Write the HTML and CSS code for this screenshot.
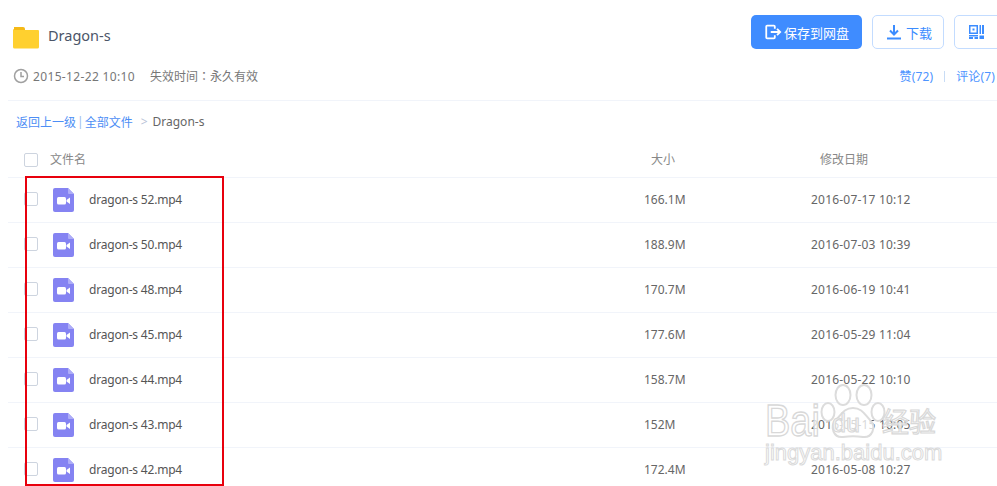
FILE: index.html
```html
<!DOCTYPE html>
<html lang="zh">
<head>
<meta charset="utf-8">
<title>Dragon-s</title>
<link rel="stylesheet" href="styles.css">
</head>
<body>
<div class="page">
  <header class="top">
    <div class="title-row">
      <svg class="folder" viewBox="0 0 26 22" width="26" height="22"><path d="M1 0h9a2 2 0 0 1 2 2v1H1z" fill="#f5b916"/><path d="M0 3a1 1 0 0 1 1-1h0v1h24a1 1 0 0 1 1 1v16a1.500 1.500 0 0 1-1.500 1.500h-23A1.500 1.500 0 0 1 0 20z" fill="#ffd02f"/></svg>
      <h1 class="title">Dragon-s</h1>
      <div class="actions">
        <button class="btn primary">
          <svg viewBox="0 0 20 20" width="18" height="18"><path d="M11 3H3.500a1 1 0 0 0-1 1v12a1 1 0 0 0 1 1H11a1 1 0 0 0 1-1v-2.500M12 6.500V4a1 1 0 0 0-1-1M7.500 10H18M14.500 6.500 18 10l-3.500 3.500" fill="none" stroke="#fff" stroke-width="2"/></svg>
          保存到网盘
        </button>
        <button class="btn ghost">
          <svg viewBox="0 0 16 16" width="16" height="16"><path d="M8 1v9M4 6.500 8 10.500l4-4M1 14.500h14" fill="none" stroke="#3b8cff" stroke-width="2"/></svg>
          下载
        </button>
        <button class="btn ghost qr">
          <svg viewBox="0 0 15 14" width="15" height="14"><path d="M0 0h9v9H0zM1.500 1.500v6h6v-6zM3.500 3.500h2v2h-2zM10.500 0H12v9h-1.500zM13 0h2v9h-2zM0 10h9v1.500H0zM0 12h4v2H0zM5.500 12H9v2H5.500zM10.500 10.500H15V14h-4.500z" fill="#3b8cff" fill-rule="evenodd"/></svg>
        </button>
      </div>
    </div>
    <div class="meta-row">
      <svg class="clock" viewBox="0 0 16 16" width="16" height="16"><circle cx="8" cy="8" r="6.500" fill="none" stroke="#a0a0a0" stroke-width="1.500"/><path d="M8 4v4.500h3" fill="none" stroke="#a0a0a0" stroke-width="1.500"/></svg>
      <span class="date">2015-12-22 10:10</span>
      <span class="expire">失效时间<span class="colon" lang="zh-Hant">：</span>永久有效</span>
      <div class="social"><a>赞(72)</a><i class="vbar"></i><a>评论(7)</a></div>
    </div>
  </header>

  <nav class="crumbs"><a>返回上一级</a><span class="pipe">|</span><a>全部文件</a><span class="gt">&gt;</span><span class="here">Dragon-s</span></nav>

  <div class="list-head row">
    <span class="check head-check"></span>
    <span class="head-name">文件名</span>
    <span class="size head-size">大小</span>
    <span class="time head-time">修改日期</span>
  </div>

  <div class="row"><span class="check"></span><svg class="vid" width="21" height="24"><use href="#v"/></svg><span class="name">dragon-s 52.mp4</span><span class="size">166.1M</span><span class="time">2016-07-17 10:12</span></div>
  <div class="row"><span class="check"></span><svg class="vid" width="21" height="24"><use href="#v"/></svg><span class="name">dragon-s 50.mp4</span><span class="size">188.9M</span><span class="time">2016-07-03 10:39</span></div>
  <div class="row"><span class="check"></span><svg class="vid" width="21" height="24"><use href="#v"/></svg><span class="name">dragon-s 48.mp4</span><span class="size">170.7M</span><span class="time">2016-06-19 10:41</span></div>
  <div class="row"><span class="check"></span><svg class="vid" width="21" height="24"><use href="#v"/></svg><span class="name">dragon-s 45.mp4</span><span class="size">177.6M</span><span class="time">2016-05-29 11:04</span></div>
  <div class="row"><span class="check"></span><svg class="vid" width="21" height="24"><use href="#v"/></svg><span class="name">dragon-s 44.mp4</span><span class="size">158.7M</span><span class="time">2016-05-22 10:10</span></div>
  <div class="row"><span class="check"></span><svg class="vid" width="21" height="24"><use href="#v"/></svg><span class="name">dragon-s 43.mp4</span><span class="size">152M</span><span class="time">2016-05-15 10:05</span></div>
  <div class="row"><span class="check"></span><svg class="vid" width="21" height="24"><use href="#v"/></svg><span class="name">dragon-s 42.mp4</span><span class="size">172.4M</span><span class="time">2016-05-08 10:27</span></div>
</div>

<svg class="defs" width="0" height="0">
  <symbol id="v" viewBox="0 0 21 24">
    <path d="M2 0h13l6 6v16a2 2 0 0 1-2 2H2a2 2 0 0 1-2-2V2a2 2 0 0 1 2-2z" fill="#8583f2"/>
    <path d="M15 0l6 6h-5a1 1 0 0 1-1-1z" fill="#aeadf7"/>
    <rect x="4" y="9" width="9" height="7.500" rx="1.500" fill="#fff"/>
    <path d="M13.500 12l3.500-2.500v6.500l-3.500-2.500z" fill="#fff"/>
  </symbol>
</svg>

<div class="redbox"></div>

<div class="mark">
  <svg class="paw" viewBox="0 0 66 60" width="66" height="60">
    <g fill="#fff" fill-opacity=".75" stroke="#dcdcdc" stroke-width="2">
      <ellipse cx="23" cy="12" rx="7.500" ry="10"/>
      <ellipse cx="44" cy="12" rx="7.500" ry="10"/>
      <ellipse cx="8" cy="29" rx="6.500" ry="9"/>
      <ellipse cx="58" cy="29" rx="6.500" ry="9"/>
      <path d="M33 25c9 0 12 7 17 12 7 7 2 18-7 17-6-1-14-1-20 0-9 1-14-10-7-17 5-5 8-12 17-12z"/>
    </g>
  </svg>
  <span class="mark-b">Bai</span><span class="mark-d">du</span><span class="mark-j">经验</span>
  <span class="mark-url">jingyan.baidu.com</span>
</div>
</body>
</html>
```
FILE: styles.css
```css
* { box-sizing: border-box; }
html, body { margin: 0; padding: 0; }
body {
  width: 997px;
  height: 486px;
  overflow: hidden;
  background: #fff;
  font-family: "Noto Sans", "Noto Sans CJK SC", sans-serif;
  font-size: 12px;
  color: #666;
  position: relative;
}
.page { padding-left: 8px; }
.top { height: 101px; border-bottom: 1px solid #f1f4fa; padding-top: 15px; }
.title-row { display: flex; align-items: center; height: 34px; padding-left: 5px; }
.folder { margin-top: 12px; }
.title { margin: 6px 0 0 9px; font-size: 14.500px; font-weight: 400; color: #4b5568; font-family: "Noto Sans", sans-serif; }
.actions { margin-left: auto; display: flex; gap: 10px; margin-right: -29px; }
.btn { height: 34px; border-radius: 5px; font: 13px "Noto Sans CJK SC", sans-serif; display: flex; align-items: center; justify-content: center; padding: 0; }
.primary { width: 111px; background: #3f8cff; border: 0; color: #fff; gap: 2px; }
.ghost { width: 72px; background: #fff; border: 1px solid #c3dcff; color: #3b8cff; gap: 4px; padding-left: 2px; }
.qr { width: 72px; justify-content: flex-start; padding-left: 14px; }
.meta-row { display: flex; align-items: center; margin-top: 18px; height: 18px; padding-left: 5px; color: #777; }
.date { margin-left: 4px; letter-spacing: .35px; }
.expire { margin-left: 15px; }
.colon { font-family: "Noto Sans CJK TC", sans-serif; }
.social { margin-left: auto; display: flex; align-items: center; color: #4d94ff; margin-right: 2px; letter-spacing: .15px; }
.vbar { width: 1px; height: 11px; background: #c8dcf5; margin: 0 11px; }
.crumbs { height: 41px; display: flex; align-items: center; padding-left: 8px; color: #4d8ef5; }
.pipe { margin: 0 1px; color: #9cbcec; }
.gt { margin: 0 5px 0 8px; color: #b8c4d8; }
.here { color: #666; }
.row { position: relative; height: 45px; display: flex; align-items: center; border-bottom: 1px solid #f1f4fa; }
.list-head { height: 36px; padding-top: 1px; color: #888; }
.check { width: 14px; height: 14px; margin-left: 16px; margin-bottom: 2px; border: 1px solid #cdd4df; border-radius: 2px; flex: none; background: #fff; }
.head-check { margin-bottom: 0; }
.head-name { margin-left: 12px; margin-bottom: 2px; }
.vid { margin-left: 15px; flex: none; }
.name { margin-left: 15px; margin-bottom: 2px; color: #555; letter-spacing: -.2px; }
.size { position: absolute; left: 636px; margin-bottom: 2px; }
.time { position: absolute; left: 803px; margin-bottom: 2px; letter-spacing: .2px; }
.head-size { left: 643px; }
.head-time { left: 812px; letter-spacing: 0; }
.defs { position: absolute; }
.redbox { position: absolute; left: 25px; top: 176px; width: 199px; height: 310px; border: 2px solid #e8000d; }
.mark { position: absolute; left: 760px; top: 380px; width: 190px; height: 100px; pointer-events: none; font-family: "Liberation Sans", sans-serif; }
.paw { position: absolute; left: 60px; top: 3px; }
.mark-b, .mark-d, .mark-j { position: absolute; color: rgba(255,255,255,.75); -webkit-text-stroke: 1.200px #d8d8d8; line-height: 40px; }
.mark-b { left: 5px; top: 21px; font-size: 38px; transform: scaleY(1.150); }
.mark-d { left: 72px; top: 28px; font-size: 25px; line-height: 30px; }
.mark-j { left: 122px; top: 21px; font-size: 27px; font-family: "Noto Sans CJK SC", sans-serif; }
.mark-url { position: absolute; left: 5px; top: 60px; font-size: 22px; color: rgba(255,255,255,.75); -webkit-text-stroke: 1px #dadada; }
```
